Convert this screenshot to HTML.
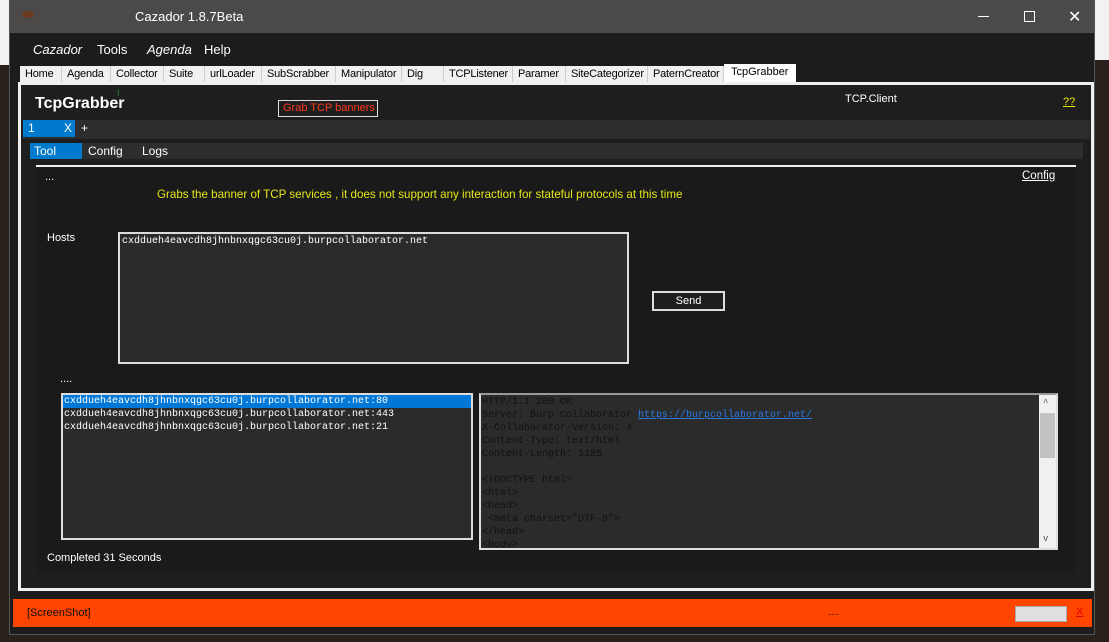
<!DOCTYPE html>
<html><head><style>
*{margin:0;padding:0;box-sizing:border-box}
body{width:1109px;height:642px;overflow:hidden;background:#2a211d;font-family:"Liberation Sans",sans-serif;position:relative}
.a{position:absolute;white-space:nowrap}
.comic{font-family:"Liberation Sans",sans-serif}
.mono{font-family:"Liberation Mono",monospace;font-size:10px;line-height:13px}
.tab{position:absolute;top:66px;height:17px;background:#f0f0f0;border-right:1px solid #ccc;font-size:11px;color:#000;padding:2px 0 0 5px;white-space:nowrap;overflow:hidden;letter-spacing:-0.2px}
</style></head><body>
<div class="a" style="left:0;top:0;width:10px;height:65px;background:#f2f2f2"></div>
<div class="a" style="left:1095px;top:0;width:14px;height:60px;background:#f2f2f2"></div>
<div class="a" style="left:9px;top:0;width:1086px;height:635px;background:#1c1c1c;border:1px solid #555"></div>
<div class="a" style="left:10px;top:0;width:1084px;height:33px;background:#4b4a48"></div>
<div class="a" style="left:22px;top:11px;width:12px;height:7px;background:#6b3a20;border-radius:50%"></div>
<div class="a" style="left:135px;top:9px;color:#fff;font-size:13px">Cazador 1.8.7Beta</div>
<div class="a" style="left:978px;top:16px;width:11px;height:1px;background:#fff"></div>
<div class="a" style="left:1024px;top:11px;width:11px;height:11px;border:1px solid #fff"></div>
<div class="a" style="left:1068px;top:7px;color:#fff;font-size:16px">✕</div>
<div class="a comic" style="left:33px;top:42px;color:#fff;font-size:13px;font-style:italic">Cazador</div>
<div class="a comic" style="left:97px;top:42px;color:#fff;font-size:13px">Tools</div>
<div class="a comic" style="left:147px;top:42px;color:#fff;font-size:13px;font-style:italic">Agenda</div>
<div class="a comic" style="left:204px;top:42px;color:#fff;font-size:13px">Help</div>
<div class="tab" style="left:20px;width:42px">Home</div>
<div class="tab" style="left:62px;width:49px">Agenda</div>
<div class="tab" style="left:111px;width:53px">Collector</div>
<div class="tab" style="left:164px;width:41px">Suite</div>
<div class="tab" style="left:205px;width:57px">urlLoader</div>
<div class="tab" style="left:262px;width:74px">SubScrabber</div>
<div class="tab" style="left:336px;width:66px">Manipulator</div>
<div class="tab" style="left:402px;width:42px">Dig</div>
<div class="tab" style="left:444px;width:69px">TCPListener</div>
<div class="tab" style="left:513px;width:53px">Paramer</div>
<div class="tab" style="left:566px;width:82px">SiteCategorizer</div>
<div class="tab" style="left:648px;width:76px">PaternCreator</div>
<div class="a" style="left:724px;top:64px;width:72px;height:19px;background:#fff;font-size:11px;padding:2px 0 0 7px">TcpGrabber</div>
<div class="a" style="left:18px;top:82px;width:1076px;height:509px;border:3px solid #f0f0f0;background:#1e1e1e"></div>
<div class="a" style="left:117px;top:88px;color:#2a8a2a;font-size:9px">I</div>
<div class="a comic" style="left:35px;top:95px;color:#fff;font-size:16px;font-weight:bold">TcpGrabber</div>
<div class="a comic" style="left:278px;top:100px;width:100px;height:17px;border:1px solid #ddd;color:#ff3a1a;font-size:11px;padding:1px 0 0 4px">Grab TCP banners</div>
<div class="a" style="left:845px;top:93px;color:#fff;font-size:11px">TCP.Client</div>
<div class="a" style="left:1063px;top:96px;color:#e8e800;font-size:11px;text-decoration:underline">??</div>
<div class="a" style="left:23px;top:120px;width:1067px;height:19px;background:#2d2d30"></div>
<div class="a" style="left:23px;top:120px;width:52px;height:17px;background:#007acc;color:#fff;font-size:12px;padding:1px 0 0 5px">1<span style="position:absolute;left:41px">X</span></div>
<div class="a" style="left:81px;top:121px;color:#fff;font-size:12px">+</div>
<div class="a" style="left:30px;top:143px;width:1053px;height:16px;background:#2d2d30"></div>
<div class="a" style="left:30px;top:143px;width:52px;height:16px;background:#007acc;color:#fff;font-size:12px;padding:1px 0 0 4px">Tool</div>
<div class="a" style="left:88px;top:144px;color:#fff;font-size:12px">Config</div>
<div class="a" style="left:142px;top:144px;color:#fff;font-size:12px">Logs</div>
<div class="a" style="left:36px;top:165px;width:1040px;height:2px;background:#f0f0f0"></div>
<div class="a" style="left:37px;top:167px;width:1038px;height:405px;background:#1a1a1a"></div>
<div class="a" style="left:45px;top:171px;color:#fff;font-size:11px">...</div>
<div class="a" style="left:1022px;top:170px;color:#fff;font-size:11.5px;text-decoration:underline">Config</div>
<div class="a comic" style="left:157px;top:188px;color:#e6e61a;font-size:11.6px">Grabs the banner of TCP services , it does not support any interaction for stateful protocols at this time</div>
<div class="a" style="left:47px;top:232px;color:#fff;font-size:11px">Hosts</div>
<div class="a mono" style="left:118px;top:232px;width:511px;height:132px;border:2px solid #ddd;background:#2b2b2b;color:#fff;padding:1px 2px">cxddueh4eavcdh8jhnbnxqgc63cu0j.burpcollaborator.net</div>
<div class="a" style="left:652px;top:291px;width:73px;height:20px;border:2px solid #ddd;background:#1e1e1e;color:#fff;font-size:11px;text-align:center;padding-top:2px">Send</div>
<div class="a" style="left:60px;top:373px;color:#fff;font-size:11px">....</div>
<div class="a mono" style="left:61px;top:393px;width:412px;height:147px;border:2px solid #ddd;background:#2b2b2b;color:#fff">
<div style="background:#0078d7;padding-left:1px">cxddueh4eavcdh8jhnbnxqgc63cu0j.burpcollaborator.net:80</div>
<div style="padding-left:1px">cxddueh4eavcdh8jhnbnxqgc63cu0j.burpcollaborator.net:443</div>
<div style="padding-left:1px">cxddueh4eavcdh8jhnbnxqgc63cu0j.burpcollaborator.net:21</div></div>
<div class="a mono" style="left:479px;top:393px;width:579px;height:157px;border:2px solid #ddd;border-top-color:#999;background:#2b2b2b;color:#111;padding:1px 0 0 1px;overflow:hidden">HTTP/1.1 200 OK<br>Server: Burp Collaborator <span style="color:#2a7ae2;text-decoration:underline">https://burpcollaborator.net/</span><br>X-Collaborator-Version: 4<br>Content-Type: text/html<br>Content-Length: 1185<br><br>&lt;!DOCTYPE html&gt;<br>&lt;html&gt;<br>&lt;head&gt;<br>&nbsp;&lt;meta charset="UTF-8"&gt;<br>&lt;/head&gt;<br>&lt;body&gt;
<div class="a" style="right:0;top:0;width:17px;height:153px;background:#f0f0f0"><div style="position:absolute;left:1px;top:18px;width:15px;height:45px;background:#c2c2c2"></div><div style="position:absolute;left:4px;top:2px;font-size:9px;color:#555">^</div><div style="position:absolute;left:4px;top:138px;font-size:9px;color:#555">v</div></div></div>
<div class="a" style="left:47px;top:552px;color:#fff;font-size:11px">Completed 31 Seconds</div>
<div class="a" style="left:13px;top:599px;width:1079px;height:28px;background:#ff4500"></div>
<div class="a" style="left:27px;top:607px;color:#111;font-size:11px">[ScreenShot]</div>
<div class="a" style="left:828px;top:607px;color:#111;font-size:10px">....</div>
<div class="a" style="left:1015px;top:606px;width:52px;height:16px;background:#e0e0e0;border:1px solid #aaa"></div>
<div class="a" style="left:1076px;top:606px;color:#d00;font-size:11px;text-decoration:underline">X</div>
</body></html>
